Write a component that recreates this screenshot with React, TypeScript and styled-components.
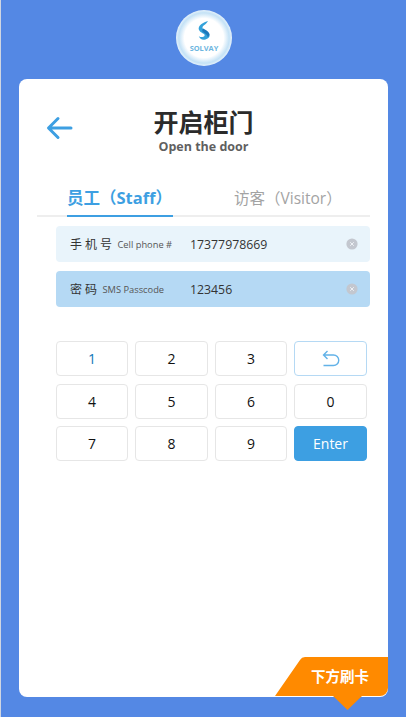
import React, { FC, useState } from 'react';
import styled, { createGlobalStyle } from 'styled-components';

const KEYS = ['1', '2', '3', 'back', '4', '5', '6', '0', '7', '8', '9', 'enter'];

const ClearIcon: FC = () => (
  <ClearMark width="12" height="12" viewBox="0 0 12 12">
    <circle cx="6" cy="6" r="5.6" fill="#c3c7cf" />
    <path d="M4.2 4.2l3.6 3.6M7.8 4.2L4.2 7.8" stroke="#eef1f5" strokeWidth="1" />
  </ClearMark>
);

const Logo: FC = () => (
  <svg width="58" height="58" viewBox="0 0 58 58">
    <defs>
      <radialGradient id="halo" cx="50%" cy="50%" r="50%">
        <stop offset="70%" stopColor="#ffffff" />
        <stop offset="90%" stopColor="#c4e2f6" />
        <stop offset="100%" stopColor="#e6f2fb" />
      </radialGradient>
    </defs>
    <circle cx="29" cy="29" r="28" fill="url(#halo)" />
    <g transform="translate(5 0.8) scale(0.8)">
      <path
        d="M35 14c-5 1.5-10 4-11.5 8-1 3.5 2.5 6 6 8 2 1 1.8 3-.3 3.8-1.8.7-4 .2-5.7-.8 1 2.6 3.6 4.8 7 4.3 4-.5 7-3 6.5-6.5-.5-3-4.5-4.5-7.5-6.3-2.2-1.3-1.8-3.5.5-5.2 1.8-1.3 3.8-3 5-5.3z"
        fill="#33a2da"
      />
      <path d="M29 23.5c2.7 1.8 6 3 7.5 6 .5 1.8-.4 3.6-1.8 4.9 0-2.7-2.700-4.400-5.700-6.200-1.800-1.300-1.300-3 0-4.700z" fill="#1c78ba" />
    </g>
    <text x="29" y="41.5" textAnchor="middle" fontFamily="'Open Sans', sans-serif" fontWeight="700" fontSize="7.4" fill="#6db6e0">
      SOLVAY
    </text>
  </svg>
);

const App: FC = () => {
  const [tab, setTab] = useState('staff');

  return (
    <Page>
      <GlobalStyle />
      <LogoWrap>
        <Logo />
      </LogoWrap>
      <Card>
        <Header>
          <BackButton aria-label="back">
            <svg width="28" height="24" viewBox="0 0 28 24">
              <path d="M25 12H3M12 2.5L2.5 12l9.5 9.5" fill="none" stroke="#3d9fe2" strokeWidth="3" strokeLinecap="round" strokeLinejoin="round" />
            </svg>
          </BackButton>
          <Title>开启柜门</Title>
          <SubTitle>Open the door</SubTitle>
        </Header>
        <Tabs>
          <Tab $active={tab === 'staff'} onClick={() => setTab('staff')}>
            员工（Staff）
          </Tab>
          <Tab $active={tab === 'visitor'} onClick={() => setTab('visitor')}>
            访客（Visitor）
          </Tab>
        </Tabs>
        <Form>
          <Field>
            <LabelGroup>
              <Label>手机号</Label>
              <Hint>Cell phone #</Hint>
            </LabelGroup>
            <Value>17377978669</Value>
            <ClearIcon />
          </Field>
          <Field $focused>
            <LabelGroup>
              <Label>密码</Label>
              <Hint>SMS Passcode</Hint>
            </LabelGroup>
            <Value>123456</Value>
            <ClearIcon />
          </Field>
        </Form>
        <Keypad>
          {KEYS.map(key => {
            if (key === 'back') {
              return (
                <Key key={key} $variant="back" aria-label="delete">
                  <svg width="18" height="17" viewBox="0 0 18 17">
                    <path d="M5.5 1L1.5 5l4 4M1.5 5h10a5 5 0 0 1 0 10.5H1.5" fill="none" stroke="#62b2e8" strokeWidth="1.4" />
                  </svg>
                </Key>
              );
            }
            if (key === 'enter') {
              return (
                <Key key={key} $variant="enter">
                  Enter
                </Key>
              );
            }
            return (
              <Key key={key} $variant={key === '1' ? 'pressed' : undefined}>
                {key}
              </Key>
            );
          })}
        </Keypad>
        <SwipeTag>
          <svg width="113" height="54" viewBox="0 0 113 54">
            <path
              d="M30 0H113V31a8 8 0 0 1-8 8H87L72.5 53 58 39H0L25 3a6 6 0 0 1 5-3z"
              fill="#ff8a00"
            />
          </svg>
          <SwipeLabel>下方刷卡</SwipeLabel>
        </SwipeTag>
      </Card>
    </Page>
  );
};

export default App;

const GlobalStyle = createGlobalStyle`
  html, body {
    margin: 0;
    padding: 0;
    background: #5488e4;
  }
  body {
    font-family: 'Open Sans', 'Noto Sans CJK SC', sans-serif;
  }
`;

const Page = styled.div`
  width: 406px;
  height: 717px;
  box-sizing: border-box;
  padding: 9px 18px 20px 18px;
  display: flex;
  flex-direction: column;
  background: #5488e4;
  border-left: 1px solid #cfd6e2;
  overflow: hidden;
`;

const LogoWrap = styled.div`
  height: 58px;
  margin-bottom: 12px;
  display: flex;
  justify-content: center;
`;

const Card = styled.div`
  position: relative;
  flex: 1;
  background: #fff;
  border-radius: 8px;
  padding: 26px 18px 0;
`;

const Header = styled.div`
  position: relative;
  height: 55px;
  margin-bottom: 27px;
  text-align: center;
`;

const BackButton = styled.div`
  position: absolute;
  left: 9px;
  top: 11px;
  width: 28px;
  height: 24px;
`;

const Title = styled.div`
  font-size: 25px;
  line-height: 35px;
  font-weight: 700;
  color: #2b2b2b;
`;

const SubTitle = styled.div`
  font-size: 12.5px;
  line-height: 16px;
  margin-top: -1px;
  font-weight: 700;
  color: #5f5f5f;
`;

const Tabs = styled.div`
  display: flex;
  gap: 61px;
  height: 30px;
  width: 333px;
  box-sizing: border-box;
  padding-left: 30px;
  border-bottom: 2px solid #eeeeee;
`;

const Tab = styled.div<{ $active?: boolean }>`
  height: 30px;
  box-sizing: border-box;
  flex: 0 0 auto;
  min-width: ${({ $active }) => ($active ? '106px' : '0')};
  font-size: ${({ $active }) => ($active ? '16.5px' : '15.5px')};
  line-height: 22px;
  white-space: nowrap;
  font-weight: ${({ $active }) => ($active ? 700 : 400)};
  color: ${({ $active }) => ($active ? '#3d9fe2' : '#a3a3a3')};
  border-bottom: ${({ $active }) => ($active ? '2px solid #3d9fe2' : '2px solid transparent')};
`;

const Form = styled.div`
  margin: 9px 0 0 19px;
  display: flex;
  flex-direction: column;
  gap: 9px;
`;

const Field = styled.div<{ $focused?: boolean }>`
  height: 36px;
  width: 314px;
  box-sizing: border-box;
  padding: 0 12px 0 14px;
  border-radius: 4px;
  display: flex;
  align-items: center;
  background: ${({ $focused }) => ($focused ? '#b5d9f4' : '#e9f4fb')};
`;

const LabelGroup = styled.div`
  width: 120px;
  display: flex;
  align-items: center;
`;

const Label = styled.span`
  font-size: 12px;
  letter-spacing: 3px;
  color: #333;
  margin-right: 2.5px;
`;

const Hint = styled.span`
  font-size: 9.3px;
  color: #555;
  white-space: nowrap;
`;

const Value = styled.span`
  flex: 1;
  font-size: 12.3px;
  color: #333;
`;

const ClearMark = styled.svg`
  flex: none;
`;

const Keypad = styled.div`
  margin: 34px 0 0 19px;
  width: 311px;
  display: grid;
  grid-template-columns: 72px 73px 72px 73px;
  grid-template-rows: 35px 35px 35px;
  gap: 7.5px 7px;
`;

const Key = styled.div<{ $variant?: 'back' | 'enter' | 'pressed' }>`
  display: flex;
  align-items: center;
  justify-content: center;
  box-sizing: border-box;
  border-radius: 4px;
  font-size: 14px;
  color: ${({ $variant }) => ($variant === 'enter' ? '#fff' : $variant === 'pressed' ? '#0e76b8' : '#111')};
  background: ${({ $variant }) => ($variant === 'enter' ? '#3d9fe2' : '#fff')};
  border: 1px solid
    ${({ $variant }) => ($variant === 'back' ? '#b5d9f4' : $variant === 'enter' ? '#3d9fe2' : '#e6e6e6')};
`;

const SwipeTag = styled.div`
  position: absolute;
  right: 0;
  bottom: -14px;
  width: 113px;
  height: 54px;
  svg {
    display: block;
  }
`;

const SwipeLabel = styled.span`
  position: absolute;
  left: 36px;
  top: 9px;
  font-size: 14.5px;
  line-height: 22px;
  font-weight: 700;
  white-space: nowrap;
  color: #fff;
`;
